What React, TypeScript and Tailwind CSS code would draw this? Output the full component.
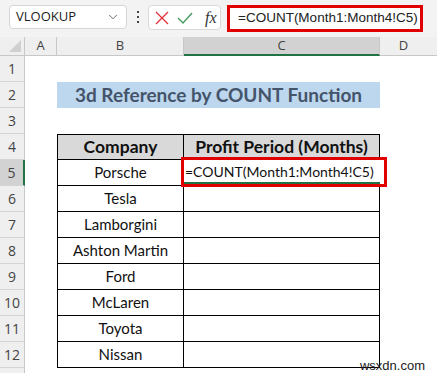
import { ChevronDown } from "lucide-react";

const companies = ["Porsche", "Tesla", "Lamborgini", "Ashton Martin", "Ford", "McLaren", "Toyota", "Nissan"];
const rowNums = [1, 2, 3, 4, 5, 6, 7, 8, 9, 10, 11, 12, 13];

function RowHead({ n }: { n: number }) {
  const active = n === 5;
  return (
    <div
      className={
        "flex items-center justify-center text-[14px] text-[#444] border-b border-[#d4d4d4] " +
        (active ? "bg-[#d2d2d2] border-r-2 border-r-[#217346]" : "bg-[#efefef] border-r border-r-[#c8c8c8]")
      }
    >
      {n < 13 ? n : null}
    </div>
  );
}

export default function App() {
  return (
    <div className="relative w-[437px] h-[373px] overflow-hidden bg-white font-['Lato','Open_Sans',sans-serif]">
      {/* formula bar */}
      <div className="flex h-[37px] items-start bg-[#f3f3f3] pt-[5px] pl-[9px]">
        <div className="flex h-[24px] w-[118px] items-center justify-between rounded-[4px] border border-[#d6d6d6] bg-white pl-[6px] pr-[6px] font-['Open_Sans',sans-serif] text-[13px] text-[#222]">
          <span>VLOOKUP</span>
          <ChevronDown className="h-[14px] w-[14px] text-[#555]" strokeWidth={1.5} />
        </div>
        <div className="flex h-[24px] w-[21px] flex-col items-center justify-center gap-[3px]">
          <span className="h-[2px] w-[2px] bg-[#444]" />
          <span className="h-[2px] w-[2px] bg-[#444]" />
          <span className="h-[2px] w-[2px] bg-[#444]" />
        </div>
        <div className="flex h-[25px] w-[73px] items-center gap-[8px] rounded-[4px] border border-[#dadada] bg-white pl-[6px]">
          <svg width="14" height="14" viewBox="0 0 14 14">
            <path d="M1 1 L13 13 M13 1 L1 13" stroke="#e0303a" strokeWidth="1.3" fill="none" />
          </svg>
          <svg width="16" height="14" viewBox="0 0 16 14">
            <path d="M1 7 L6 12 L15 2" stroke="#3f9a5c" strokeWidth="1.3" fill="none" />
          </svg>
          <span className="ml-[4px] font-['Liberation_Serif',serif] text-[16px] italic text-[#333]">fx</span>
        </div>
        <div className="ml-[6px] flex h-[27px] w-[196px] items-center whitespace-nowrap border-[3px] border-[#e00000] bg-white pl-[8px] font-['Liberation_Sans',sans-serif] text-[13.5px] text-[#222]">
          =COUNT(Month1:Month4!C5)
        </div>
      </div>

      {/* sheet grid */}
      <div className="grid grid-cols-[25px_32px_127px_196px_1fr] grid-rows-[19px_repeat(13,26px)] font-['Open_Sans',sans-serif]">
        {/* column headers */}
        <div className="relative border-b border-r border-[#c8c8c8] bg-[#efefef]">
          <div className="absolute bottom-[3px] right-[3px] h-0 w-0 border-b-[12px] border-l-[12px] border-b-[#d0d0d0] border-l-transparent" />
        </div>
        <div className="flex items-center justify-center border-b border-r border-[#c8c8c8] bg-[#efefef] text-[13px] text-[#444]">A</div>
        <div className="flex items-center justify-center border-b border-r border-[#c8c8c8] bg-[#efefef] text-[13px] text-[#444]">B</div>
        <div className="flex items-center justify-center border-b-2 border-b-[#217346] border-r border-r-[#c8c8c8] bg-[#d2d2d2] text-[13px] text-[#444]">C</div>
        <div className="flex items-center justify-center border-b border-[#c8c8c8] bg-[#efefef] pr-[10px] text-[13px] text-[#444]">D</div>

        {rowNums.map((n) => {
          const r = n;
          let b: React.ReactNode = null;
          let c: React.ReactNode = null;
          let bCls = "";
          let cCls = "";
          if (r === 2) {
            return [
              <RowHead key={"h" + r} n={r} />,
              <div key={"a" + r} />,
              <div
                key={"t" + r}
                className="col-span-2 flex items-center justify-center whitespace-nowrap bg-[#bdd7ee] font-['Lato',sans-serif] text-[19px] font-bold text-[#44546a]"
              >
                3d Reference by COUNT Function
              </div>,
              <div key={"d" + r} />,
            ];
          }
          if (r === 4) {
            bCls = "bg-[#d9d9d9] border border-black font-bold text-[17.5px]";
            cCls = "bg-[#d9d9d9] border-y border-r border-black font-bold text-[17.5px]";
            b = "Company";
            c = "Profit Period (Months)";
          } else if (r >= 5 && r <= 12) {
            bCls = "border-x border-b border-black text-[15px]";
            cCls = "border-r border-b border-black text-[15px]";
            b = companies[r - 5];
          }
          return [
            <RowHead key={"h" + r} n={r} />,
            <div key={"a" + r} />,
            <div key={"b" + r} className={"flex items-center justify-center whitespace-nowrap font-['Lato',sans-serif] text-[#111] " + bCls}>
              {b}
            </div>,
            <div key={"c" + r} className={"relative flex items-center justify-center whitespace-nowrap font-['Lato',sans-serif] text-[#111] " + cCls}>
              {c}
              {r === 5 && (
                <div className="absolute -left-[3px] -top-[3px] z-10 flex h-[30px] w-[206px] items-center border-[3px] border-[#e00000] bg-white">
                  <div className="flex h-full w-[196px] items-center whitespace-nowrap border-b-2 border-[#217346] pl-[1px] font-['Lato',sans-serif] text-[14px] text-[#111]">
                    =COUNT(Month1:Month4!C5)
                  </div>
                </div>
              )}
            </div>,
            <div key={"d" + r} />,
          ];
        })}
      </div>

      <div className="absolute bottom-[1px] right-[12px] font-['Liberation_Sans',sans-serif] text-[13px] leading-[13px] text-[#222]">wsxdn.com</div>
    </div>
  );
}
